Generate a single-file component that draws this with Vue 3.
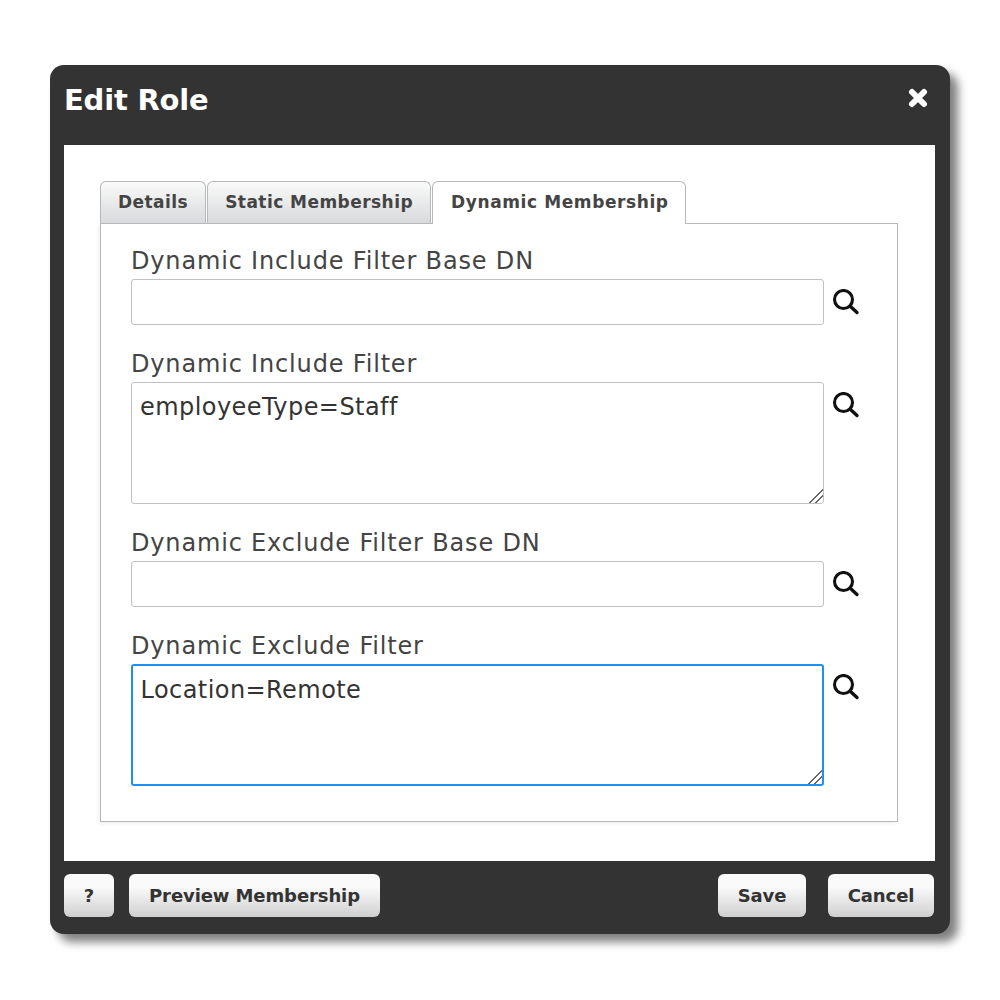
<template>
  <div class="page">
    <div class="modal">
      <div class="header">
        <h1 class="title">Edit Role</h1>
        <svg class="close" viewBox="0 0 22 22" width="22" height="22">
          <path d="M5 5 L17 17 M17 5 L5 17" stroke="#fff" stroke-width="6" stroke-linecap="round" fill="none" />
        </svg>
      </div>

      <div class="body">
        <div class="tabs">
          <div v-for="tab in tabs" :key="tab" class="tab" :class="{ active: tab === activeTab }">{{ tab }}</div>
        </div>
        <div class="panel">
          <div v-for="field in fields" :key="field.label" class="field">
            <label class="label">{{ field.label }}</label>
            <div class="row">
              <textarea
                v-if="field.multi"
                class="control area"
                :class="{ focused: field.focused }"
                :value="field.value"
              ></textarea>
              <input v-else class="control line" type="text" :value="field.value" />
              <svg class="search" viewBox="0 0 28 28" width="28" height="28">
                <circle cx="11.5" cy="10.5" r="9" fill="none" stroke="#111" stroke-width="3.1" />
                <path d="M18.5 17.5 L25 23.5" stroke="#111" stroke-width="3.4" stroke-linecap="round" />
              </svg>
            </div>
          </div>
        </div>
      </div>

      <div class="footer">
        <div class="group">
          <button class="btn help">?</button>
          <button class="btn preview">Preview Membership</button>
        </div>
        <div class="group right">
          <button class="btn save">Save</button>
          <button class="btn cancel">Cancel</button>
        </div>
      </div>
    </div>
  </div>
</template>

<script setup>
const tabs = ['Details', 'Static Membership', 'Dynamic Membership']
const activeTab = 'Dynamic Membership'

const fields = [
  { label: 'Dynamic Include Filter Base DN', value: '', multi: false },
  { label: 'Dynamic Include Filter', value: 'employeeType=Staff', multi: true },
  { label: 'Dynamic Exclude Filter Base DN', value: '', multi: false },
  { label: 'Dynamic Exclude Filter', value: 'Location=Remote', multi: true, focused: true },
]
</script>

<style>
html, body {
  margin: 0;
  background: #fff;
}
</style>

<style scoped>
.page {
  width: 1000px;
  height: 1000px;
  padding: 65px 50px 0;
  box-sizing: border-box;
  font-family: "DejaVu Sans", Verdana, sans-serif;
}
.modal {
  width: 900px;
  height: 869px;
  background: #333;
  border-radius: 14px;
  box-shadow: 8px 8px 10px rgba(0, 0, 0, 0.5);
  display: flex;
  flex-direction: column;
  padding: 0 15px 0 14px;
  box-sizing: border-box;
}
.header {
  height: 80px;
  flex: none;
  display: flex;
  align-items: flex-start;
  justify-content: space-between;
}
.title {
  margin: 17px 0 0;
  font-size: 29px;
  line-height: 36px;
  font-weight: 700;
  color: #fff;
  letter-spacing: -0.2px;
}
.close {
  margin: 22px 6px 0 0;
}
.body {
  height: 716px;
  flex: none;
  background: #fff;
  padding: 36px 37px 0 36px;
  box-sizing: border-box;
}
.tabs {
  display: flex;
  height: 43px;
  gap: 1px;
  position: relative;
  z-index: 1;
}
.tab {
  height: 42px;
  box-sizing: border-box;
  border: 1px solid #b5b9bc;
  border-bottom: none;
  border-radius: 6px 6px 0 0;
  background: linear-gradient(#fafafa, #d8dadb);
  color: #444;
  font-size: 17px;
  font-weight: 700;
  letter-spacing: 0.45px;
  line-height: 40px;
  padding: 0 17px;
  white-space: nowrap;
}
.tab.active {
  height: 43px;
  background: #fff;
  letter-spacing: 0.6px;
  padding: 0 16px 0 18px;
}
.panel {
  height: 599px;
  margin-top: -1px;
  border: 1px solid #b5b9bc;
  box-sizing: border-box;
  padding: 17px 0 0 30px;
  box-shadow: -2px 2px 4px rgba(0, 0, 0, 0.06);
}
.field {
  margin-bottom: 19px;
}
.label {
  display: block;
  padding-top: 2px;
  font-size: 24px;
  letter-spacing: 0.83px;
  line-height: 36px;
  color: #444;
}
.row {
  display: flex;
  align-items: flex-start;
  gap: 8px;
}
.control {
  display: block;
  width: 693px;
  margin: 0;
  box-sizing: border-box;
  border: 1.5px solid #bfc2c4;
  border-radius: 3px;
  background: #fff;
  outline: none;
  padding: 10px 8px;
  font-family: inherit;
  font-size: 24px;
  letter-spacing: 0.44px;
  line-height: 28px;
  color: #333;
}
.line {
  height: 46px;
}
.area {
  height: 122px;
  resize: both;
}
.area::-webkit-resizer {
  background: linear-gradient(
    135deg,
    transparent 52%,
    #666 52%,
    #666 59%,
    transparent 59%,
    transparent 72%,
    #666 72%,
    #666 79%,
    transparent 79%
  );
}
.area.focused {
  border: 2px solid #1e90f0;
  padding: 9.5px 7.5px;
}
.search {
  margin-top: 10px;
  flex: none;
}
.footer {
  flex: 1;
  display: flex;
  justify-content: space-between;
  padding-top: 13px;
  box-sizing: border-box;
}
.group {
  display: flex;
  gap: 15px;
  height: 43px;
}
.group.right {
  gap: 22px;
  margin-right: 1px;
}
.btn {
  height: 43px;
  margin: 0;
  padding: 0;
  border: none;
  border-radius: 6px;
  background: linear-gradient(#fafafa 30%, #cfcfcf);
  color: #333;
  font-family: inherit;
  font-size: 18px;
  letter-spacing: -0.1px;
  font-weight: 700;
}
.help {
  width: 50px;
}
.preview {
  width: 251px;
}
.save {
  width: 88px;
}
.cancel {
  width: 106px;
}
</style>
